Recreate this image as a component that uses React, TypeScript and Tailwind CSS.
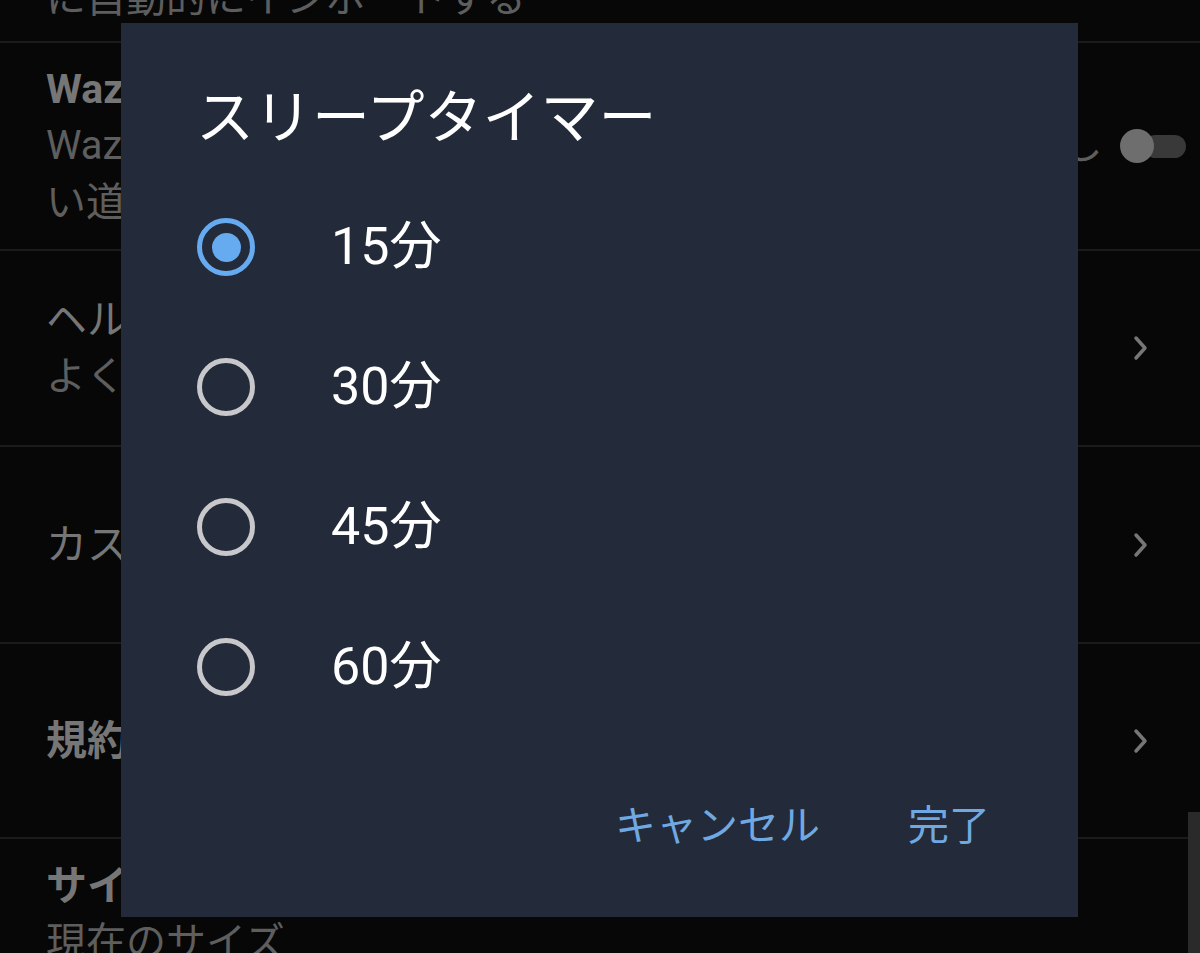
import React from "react";

const FONT = "font-['Roboto','Noto_Sans_CJK_JP',sans-serif]";

function Chevron() {
  return (
    <svg width="16" height="26" viewBox="0 0 16 26" fill="none">
      <path d="M3 3l9 10-9 10" stroke="#767676" strokeWidth="3.5" strokeLinecap="round" strokeLinejoin="round" />
    </svg>
  );
}

function Toggle() {
  return (
    <div className="relative h-[36px] w-[66px] flex items-center">
      <div className="ml-[24px] h-[23px] w-[42px] rounded-full bg-[#393939]" />
      <div className="absolute left-0 top-[1px] h-[34px] w-[34px] rounded-full bg-[#6e6e6e]" />
    </div>
  );
}

function Row({
  height,
  title,
  lines = [],
  bold = false,
  right,
  rightAlign = "justify-center",
}: {
  height: string;
  title: string;
  lines?: string[];
  bold?: boolean;
  right?: React.ReactNode;
  rightAlign?: string;
}) {
  return (
    <div className={`flex ${height} items-center border-b-2 border-[#1b1b1b] pl-[46px] pr-[14px]`}>
      <div className="flex min-w-0 flex-1 flex-col justify-center">
        <div className={`whitespace-nowrap text-[41px] leading-[56px] text-[#767676] ${bold ? "font-bold" : ""}`}>
          {title}
        </div>
        {lines.map((l) => (
          <div key={l} className="whitespace-nowrap text-[40px] leading-[57px] text-[#5e5e5e]">
            {l}
          </div>
        ))}
      </div>
      {right && <div className={`flex w-[90px] ${rightAlign}`}>{right}</div>}
    </div>
  );
}

function Radio({ checked }: { checked: boolean }) {
  return (
    <div
      className={`flex h-[58px] w-[58px] items-center justify-center rounded-full border-[5px] ${
        checked ? "border-[#66aaf0]" : "border-[#c8c8cc]"
      }`}
    >
      {checked && <div className="h-[29px] w-[29px] rounded-full bg-[#66aaf0]" />}
    </div>
  );
}

export default function App() {
  const options = ["15分", "30分", "45分", "60分"];

  return (
    <div className={`relative h-[953px] w-[1200px] overflow-hidden bg-[#070707] ${FONT}`}>
      {/* settings list behind the dialog */}
      <div className="flex flex-col">
        <div className="h-[43px] overflow-hidden border-b-2 border-[#1b1b1b] pl-[46px]">
          <div className="mt-[-30px] whitespace-nowrap text-[40px] leading-[57px] text-[#5e5e5e]">
            に自動的にインポートする
          </div>
        </div>
        <Row
          height="h-[208px]"
          bold
          title="Wazeとの連携"
          lines={["Wazeアプリのナビゲーション中に音楽を再生しながら新し", "い道を探索します"]}
          right={<Toggle />}
          rightAlign="justify-end"
        />
        <Row height="h-[196px]" title="ヘルプとフィードバック" lines={["よくある質問"]} right={<Chevron />} />
        <Row height="h-[197px]" title="カスタマイズ" right={<Chevron />} />
        <Row height="h-[195px]" bold title="規約とプライバシー" right={<Chevron />} />
        <div className="flex flex-col pl-[46px] pt-[19px]">
          <div className="text-[41px] font-bold leading-[56px] text-[#767676]">サイズ</div>
          <div className="text-[40px] leading-[57px] text-[#5e5e5e]">現在のサイズ</div>
        </div>
      </div>

      {/* scrollbar */}
      <div className="absolute right-0 top-[812px] h-[141px] w-[12px] bg-[#2a2a2a]" />

      {/* dialog */}
      <div className="absolute left-[121px] top-[23px] flex h-[894px] w-[957px] flex-col bg-[#232a39] pl-[75px]">
        <h2 className="pt-[61px] text-[58px] font-normal leading-[68px] text-white">スリープタイマー</h2>
        <div className="mt-[25px] flex flex-col">
          {options.map((o, i) => (
            <div key={o} className="flex h-[140px] items-center">
              <div className="ml-[1px]">
                <Radio checked={i === 0} />
              </div>
              <span className="ml-[76px] text-[52px] leading-none text-white">{o}</span>
            </div>
          ))}
        </div>
        <div className="mt-auto mb-[50px] flex h-[80px] items-center justify-end gap-[88px] pr-[88px] text-[41px] text-[#70a9e2]">
          <button>キャンセル</button>
          <button>完了</button>
        </div>
      </div>
    </div>
  );
}
